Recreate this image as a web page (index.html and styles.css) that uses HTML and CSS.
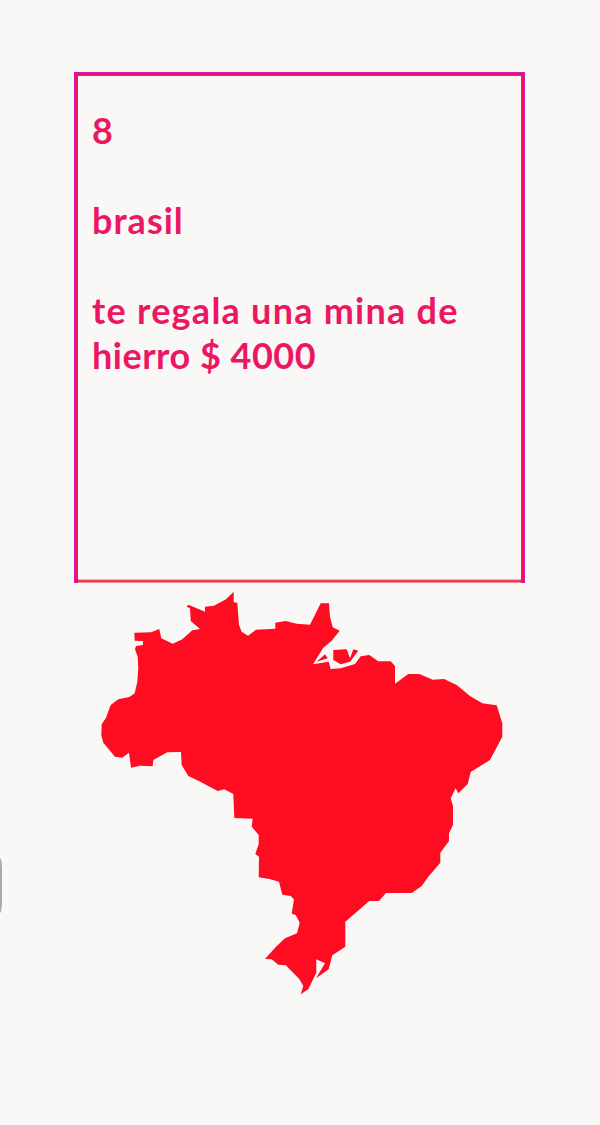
FILE: index.html
```html
<!DOCTYPE html>
<html lang="es">
<head>
<meta charset="utf-8">
<title>brasil</title>
<link rel="stylesheet" href="styles.css">
</head>
<body>
<div class="edge-mark"></div>
<main class="page">
  <section class="card">
    <p class="card-line">8</p>
    <p class="card-line tracked-mid">brasil</p>
    <p class="card-line"><span class="row tracked-wide">te regala una mina de</span> <span class="row tracked-low">hierro $ 4000</span></p>
  </section>
  <svg class="map" viewBox="0 0 600 420" width="600" height="420" aria-label="Mapa de Brasil">
    <g transform="translate(0 -585)">
      <path class="land" d="M134.3 632.7L151 632.3L159.3 629L161.3 638.3L172.7 643.7L182.3 639.3L192.3 630.3L200 629L190.7 621L190 608.3L186.7 606.7L188.3 604.7L205 611.7L205 606.7L214 605.7L226 599.3L233.7 591.7L233.7 602.3L237.3 602.7L239 625L241.7 631.7L248 635.7L256 629.7L275.3 628.7L275.3 622.7L285.7 621L296.7 623.7L310 624.7L320.7 603.3L329 603.3L330 616.7L332.7 627.3L339.7 630.7L331.7 640.7L323.3 647.7L313 664.3L328.7 661.7L330.7 669L340.7 668.3L355 664L360.7 656.3L369.3 655L378.3 661.3L390.7 661.3L395 666L395 683.7L408.3 674L419.3 674L432.7 679.7L444 679L456.7 685L470 696L482.3 703.3L496.7 705.3L502.3 723.3L502.3 736.7L490 760L470.7 772L467.7 784L458.3 793.3L455.7 788.3L450.7 798.3L453 806L453 825L449 833.3L449 841L440.3 852.7L440.3 862.7L428.3 876.7L421.7 886L411.7 893L386 893L379 901L369.3 901L345.3 921.7L345.3 946.7L332.3 955.3L328.7 969.3L316 978.3L325 963.3L316.3 959.3L316.3 972.7L308.3 989.3L300.7 994.3L303.3 986L299.3 979L285.7 965.3L278.3 964.7L271.7 959.3L265 959L276 946.7L285 938.3L297 933.3L299.7 922.7L295.7 915L291.7 913.7L294 899.3L290.7 896L282.3 894.7L279 881.7L269.3 879L258.7 877.3L259 856.7L255.3 854L258.7 844L258.7 835L251.7 826.7L252.7 818.7L234.3 818L233.3 794L224.3 789.3L217.7 791L198.3 780.7L188.3 776L181.7 765L181 752L167.3 752.3L153.3 760L152.7 766.3L140 765.7L131 767.7L129 752.7L122.3 757.7L115 756.7L103.3 742.7L101.3 735L101.7 724.3L106 717.7L110.7 705L118.3 699.3L129.3 697L134.7 693.3L137.3 681.7L138.3 668.3L137.7 656.7L135 649.3L136 646L143 645L143 641L134.7 640.7Z"/>
      <path class="land" d="M333.3 650L346.7 649.3L350 658.3L353.3 649.3L358.3 650.7L350 661.7L340.7 664.3L333.3 660Z"/>
      <path class="land" d="M316.7 661.7L325 654.3L327.7 658.3Z"/>
    </g>
  </svg>
</main>
</body>
</html>
```
FILE: styles.css
```css
html, body {
  margin: 0;
  padding: 0;
}
body {
  background: #faf8f6;
  width: 600px;
  height: 1125px;
  overflow: hidden;
  position: relative;
}
.page {
  display: flex;
  flex-direction: column;
  align-items: flex-start;
  padding-top: 72px;
}
.card {
  box-sizing: border-box;
  position: relative;
  width: 451px;
  height: 511px;
  margin-left: 74px;
  padding: 35px 16px 0 17px;
  border: 1px solid #cf1cb4;
  box-shadow: inset 0 0 0 2px #f80f5c, inset 0 0 0 3px #cf1cb4;
  color: #ec1763;
  font-family: "Lato", "Liberation Sans", sans-serif;
  font-weight: 700;
  font-size: 36px;
  line-height: 45px;
}
.card::after {
  content: "";
  position: absolute;
  left: 3px;
  right: 3px;
  bottom: -1px;
  height: 4px;
  background: linear-gradient(#fadadd, #fb4a5c 35%, #fb1a30 60%, #fbc8cc);
}
.card-line {
  margin: 0 0 45px;
}
.row {
  display: block;
}
.tracked-mid {
  letter-spacing: 1px;
}
.tracked-wide {
  letter-spacing: 1.25px;
}
.tracked-low {
  letter-spacing: 0.5px;
}
.map {
  display: block;
  margin-top: 2px;
  flex: none;
}
.land {
  fill: #fd0c22;
}
.edge-mark {
  position: absolute;
  left: 0;
  top: 858px;
  width: 2px;
  height: 55px;
  border-radius: 0 2px 2px 0 / 0 12px 12px 0;
  background: #a8a8a8;
}
```
